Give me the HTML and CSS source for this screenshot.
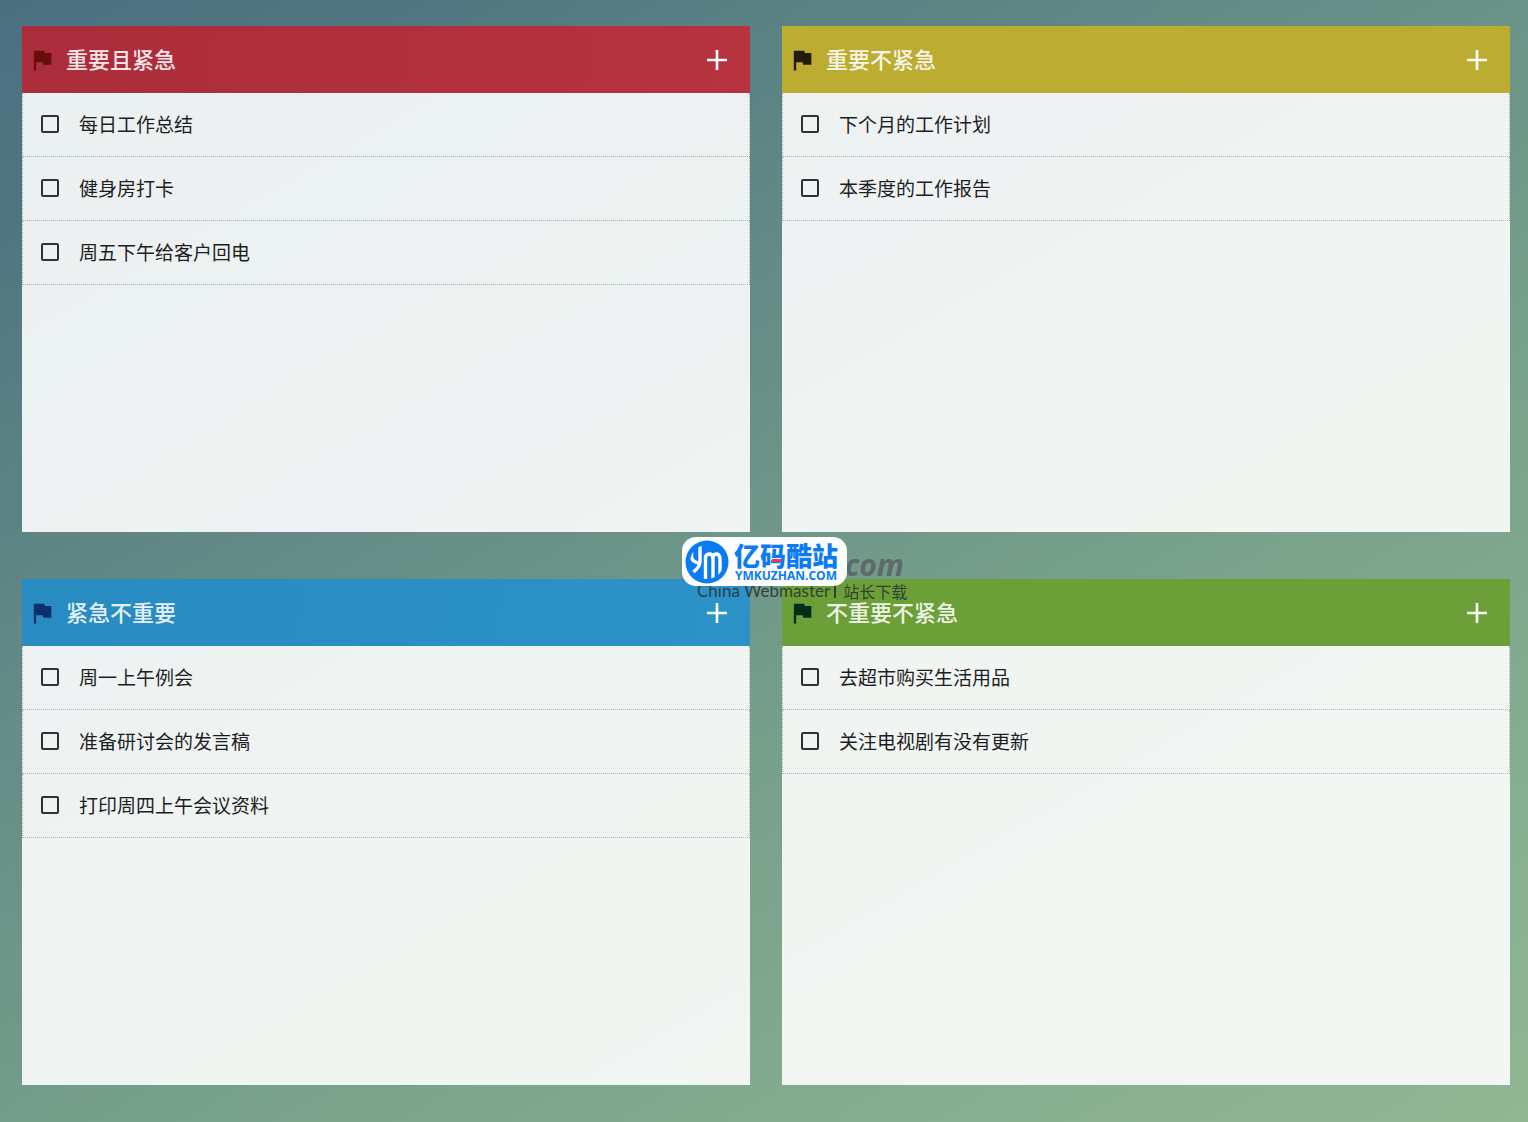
FILE: index.html
```html
<!DOCTYPE html>
<html lang="zh-CN">
<head>
<meta charset="utf-8">
<meta name="viewport" content="width=device-width, initial-scale=1">
<title>四象限待办</title>
<link rel="stylesheet" href="styles.css">
</head>
<body>
<svg class="symbols" aria-hidden="true">
  <symbol id="flag" viewBox="0 0 24 24"><path d="M14.4 6L14 4H5v17h2v-7h5.6l.4 2h7V6z"/></symbol>
  <symbol id="plus" viewBox="0 0 20 20"><path d="M8.700 0h2.600v8.700H20v2.600h-8.700V20H8.700v-8.700H0V8.700h8.700z"/></symbol>
</svg>
<main class="board">
  <section class="card card-red">
    <header class="card-head">
      <svg class="flag"><use href="#flag"/></svg>
      <h2 class="title">重要且紧急</h2>
      <button class="add" type="button" aria-label="添加"><svg class="plus"><use href="#plus"/></svg></button>
    </header>
    <ul class="list">
      <li class="row"><label class="task"><input class="check" type="checkbox">每日工作总结</label></li>
      <li class="row"><label class="task"><input class="check" type="checkbox">健身房打卡</label></li>
      <li class="row"><label class="task"><input class="check" type="checkbox">周五下午给客户回电</label></li>
    </ul>
  </section>
  <section class="card card-yellow">
    <header class="card-head">
      <svg class="flag"><use href="#flag"/></svg>
      <h2 class="title">重要不紧急</h2>
      <button class="add" type="button" aria-label="添加"><svg class="plus"><use href="#plus"/></svg></button>
    </header>
    <ul class="list">
      <li class="row"><label class="task"><input class="check" type="checkbox">下个月的工作计划</label></li>
      <li class="row"><label class="task"><input class="check" type="checkbox">本季度的工作报告</label></li>
    </ul>
  </section>
  <section class="card card-blue">
    <header class="card-head">
      <svg class="flag"><use href="#flag"/></svg>
      <h2 class="title">紧急不重要</h2>
      <button class="add" type="button" aria-label="添加"><svg class="plus"><use href="#plus"/></svg></button>
    </header>
    <ul class="list">
      <li class="row"><label class="task"><input class="check" type="checkbox">周一上午例会</label></li>
      <li class="row"><label class="task"><input class="check" type="checkbox">准备研讨会的发言稿</label></li>
      <li class="row"><label class="task"><input class="check" type="checkbox">打印周四上午会议资料</label></li>
    </ul>
  </section>
  <section class="card card-green">
    <header class="card-head">
      <svg class="flag"><use href="#flag"/></svg>
      <h2 class="title">不重要不紧急</h2>
      <button class="add" type="button" aria-label="添加"><svg class="plus"><use href="#plus"/></svg></button>
    </header>
    <ul class="list">
      <li class="row"><label class="task"><input class="check" type="checkbox">去超市购买生活用品</label></li>
      <li class="row"><label class="task"><input class="check" type="checkbox">关注电视剧有没有更新</label></li>
    </ul>
  </section>
  <div class="mark">
    <span class="mark-com">.com</span>
    <span class="mark-sub"><span class="mark-latin">China Webmaster</span><span class="mark-bar"></span>站长下载</span>
    <div class="logo">
      <svg class="emblem" viewBox="0 0 44 44" aria-hidden="true">
        <clipPath id="disc"><circle cx="22" cy="22" r="17"/></clipPath>
        <circle cx="22" cy="22" r="21.500" fill="#0b7bf3"/>
        <g clip-path="url(#disc)" fill="none" stroke="#fff" stroke-width="3.400">
          <path d="M6.500 12v4.500q0 5.500 8.500 7M15 4v17.500q0 6-8 11.500"/>
          <path d="M20.500 40V15.500M20.500 17q1-3 4-3t3.500 4v24M28 17q1-3 3.500-3t3.500 4v20"/>
        </g>
      </svg>
      <div class="logo-text">
        <span class="logo-name">亿<span class="logo-dash">码</span>酷站</span>
        <span class="logo-url">YMKUZHAN.COM</span>
      </div>
    </div>
  </div>
</main>
</body>
</html>
```
FILE: styles.css
```css
* {
  box-sizing: border-box;
}

body {
  margin: 0;
  min-height: 100vh;
  font-family: "Noto Sans CJK SC", sans-serif;
  color: #1c1e1f;
  background: linear-gradient(150deg, #4b6f80 0%, #507780 12%, #658c86 37%, #77a08b 60%, #87ae90 83%, #90b693 100%);
}

.symbols {
  display: none;
}

.board {
  position: relative;
  display: grid;
  grid-template-columns: 1fr 1fr;
  grid-auto-rows: 1fr;
  gap: 47px 32px;
  min-height: 100vh;
  padding: 26px 18px 37px 22px;
}

.card {
  display: flex;
  flex-direction: column;
}

.card-head {
  display: flex;
  align-items: center;
  height: 67px;
  padding: 0 18px 0 6px;
}

.card-red .card-head { background: linear-gradient(100deg, #ab2c3a, #b6333f); }
.card-red .flag { fill: #680f0b; }
.card-yellow .card-head { background: #bcac32; }
.card-yellow .flag { fill: #211b08; }
.card-blue .card-head { background: linear-gradient(100deg, #288bc1, #2c92c7); }
.card-blue .flag { fill: #0b2f6c; }
.card-green .card-head { background: #6c9f37; }
.card-green .flag { fill: #052b19; }

.flag {
  width: 28px;
  height: 28px;
}

.title {
  flex: 1;
  margin: 0 0 0 10px;
  padding-bottom: 4px;
  font-size: 22px;
  line-height: 26px;
  font-weight: 500;
  color: rgba(255, 255, 255, .9);
}

.add {
  display: flex;
  align-items: center;
  justify-content: center;
  width: 30px;
  height: 30px;
  padding: 0;
  border: 0;
  background: none;
  cursor: pointer;
}

.plus {
  width: 20px;
  height: 20px;
  fill: #fff;
}

.list {
  flex: 1;
  margin: 0;
  padding: 0;
  list-style: none;
  background: rgba(255, 255, 255, .89);
}

.row {
  border: 1px dotted rgba(60, 80, 80, .4);
  border-top: 0;
}

.task {
  display: flex;
  align-items: center;
  gap: 20px;
  height: 63px;
  padding: 0 0 2px 18px;
  font-size: 19px;
  line-height: 28px;
}

.check {
  appearance: none;
  width: 18px;
  height: 18px;
  margin: 0;
  border: 2px solid #2e3233;
  border-radius: 2px;
}

.check:checked {
  background: #2e3233;
}

/* Site badge, centred over the board */
.mark {
  position: absolute;
  top: 50%;
  left: 50%;
  width: 165px;
  height: 49px;
  margin: -24px 0 0 -82px;
  pointer-events: none;
}

.mark-com {
  position: absolute;
  right: -57px;
  top: 14px;
  font: italic bold 30px/28px "Open Sans", sans-serif;
  color: #5d6a6a;
}

.mark-sub {
  position: absolute;
  left: 15px;
  top: 46px;
  display: flex;
  align-items: center;
  font-size: 16px;
  line-height: 16px;
  white-space: nowrap;
  color: rgba(38, 48, 48, .85);
}

.mark-latin {
  font-family: Lato, sans-serif;
  font-size: 17px;
}

.mark-bar {
  width: 2px;
  height: 13px;
  margin: 0 7px 0 4px;
  background: currentColor;
}

.logo {
  position: relative;
  display: flex;
  align-items: center;
  gap: 5px;
  height: 49px;
  padding: 0 3px;
  border-radius: 14px;
  background: #fcfdfe;
}

.emblem {
  width: 44px;
  height: 44px;
}

.logo-text {
  display: flex;
  flex-direction: column;
  color: #0b7bf3;
}

.logo-name {
  font-size: 26px;
  line-height: 28px;
  font-weight: 900;
}

.logo-dash {
  position: relative;
}

.logo-dash::after {
  content: "";
  position: absolute;
  left: 12px;
  bottom: 11px;
  width: 9px;
  height: 3px;
  background: #ee3b45;
}

.logo-url {
  padding-left: 1px;
  font: bold 12px/14px "Open Sans", sans-serif;
}
```
